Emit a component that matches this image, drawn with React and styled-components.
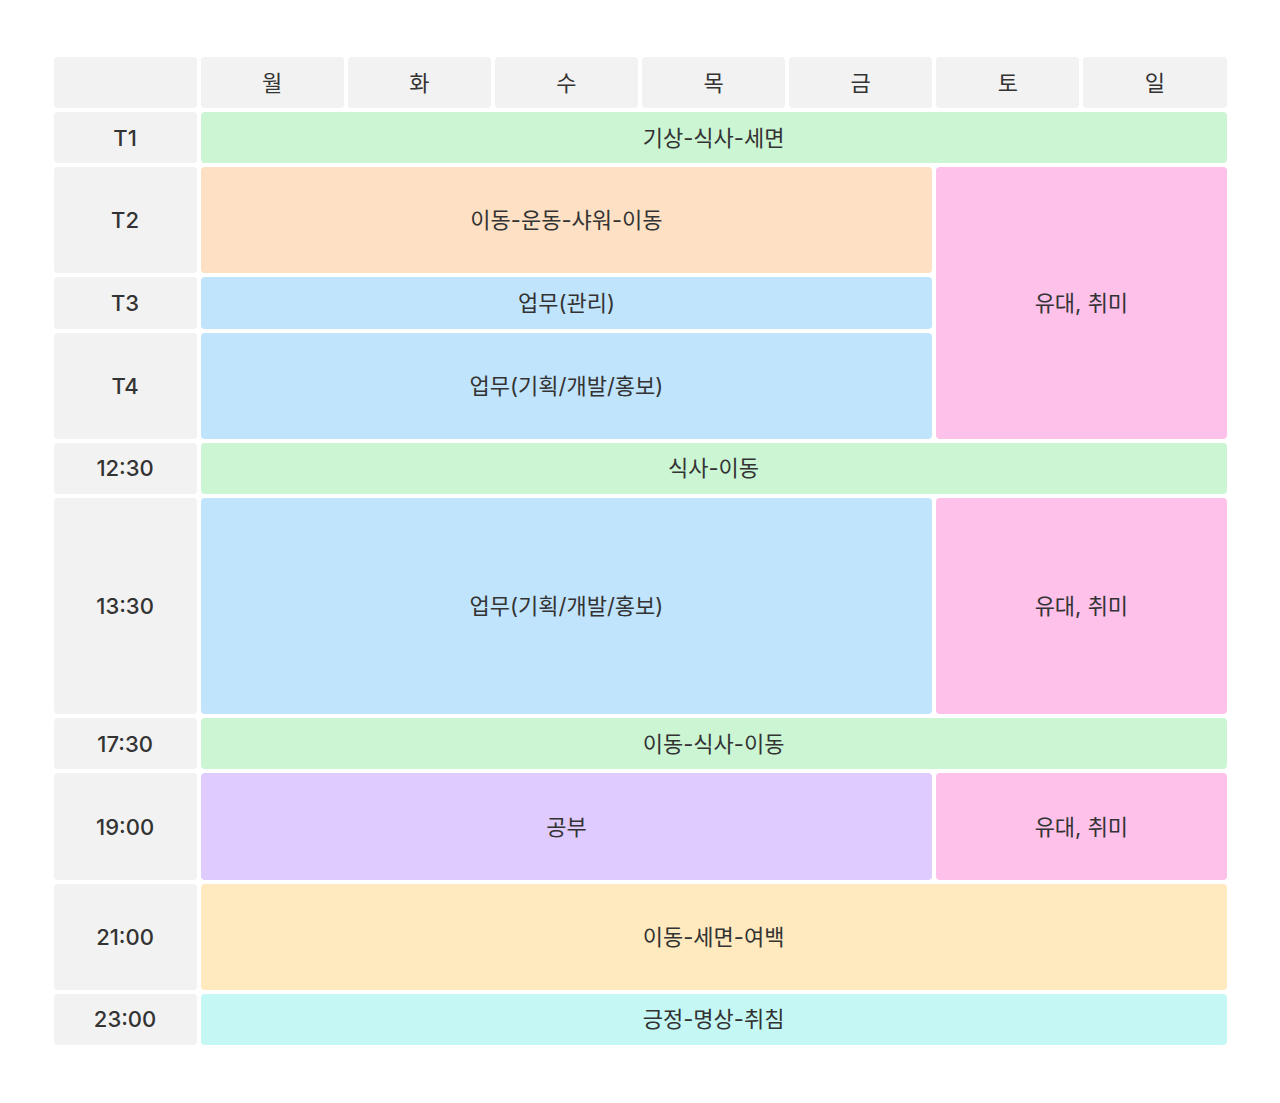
import React from 'react'
import styled, { createGlobalStyle } from 'styled-components'

const GlobalStyle = createGlobalStyle`
  html, body {
    margin: 0;
    padding: 0;
    background: #ffffff;
  }
  body {
    font-family: Inter, "Noto Sans CJK KR", sans-serif;
    color: #333333;
  }
`

const Page = styled.div`
  display: flex;
  justify-content: center;
  padding-top: 57px;
`

const Table = styled.div`
  display: grid;
  width: 1173px;
  height: 988px;
  grid-template-columns: repeat(8, 1fr);
  grid-template-rows: repeat(18, 1fr);
  gap: 4px;
`

const Cell = styled.div`
  display: flex;
  align-items: center;
  justify-content: center;
  border-radius: 4px;
  font-size: 22px;
  line-height: 1;
  color: #333333;
  background: ${p => p.$bg || '#f2f2f2'};
  grid-column: ${p => p.$col} / span ${p => p.$span || 1};
  grid-row: ${p => p.$row} / span ${p => p.$rows || 1};
`

const DayCell = styled(Cell)`
  font-weight: 400;
`

const TimeCell = styled(Cell)`
  grid-column: 1;
  font-weight: 500;
`

const colors = {
  green: '#ccf5d3',
  orange: '#fee0c4',
  blue: '#c1e4fd',
  pink: '#fdc1ea',
  purple: '#dfcbfe',
  yellow: '#feeabe',
  cyan: '#c5f8f4',
}

const days = ['월', '화', '수', '목', '금', '토', '일']

const times = [
  { label: 'T1', row: 2, rows: 1 },
  { label: 'T2', row: 3, rows: 2 },
  { label: 'T3', row: 5, rows: 1 },
  { label: 'T4', row: 6, rows: 2 },
  { label: '12:30', row: 8, rows: 1 },
  { label: '13:30', row: 9, rows: 4 },
  { label: '17:30', row: 13, rows: 1 },
  { label: '19:00', row: 14, rows: 2 },
  { label: '21:00', row: 16, rows: 2 },
  { label: '23:00', row: 18, rows: 1 },
]

const blocks = [
  { text: '기상-식사-세면', col: 2, span: 7, row: 2, rows: 1, color: 'green' },
  { text: '이동-운동-샤워-이동', col: 2, span: 5, row: 3, rows: 2, color: 'orange' },
  { text: '유대, 취미', col: 7, span: 2, row: 3, rows: 5, color: 'pink' },
  { text: '업무(관리)', col: 2, span: 5, row: 5, rows: 1, color: 'blue' },
  { text: '업무(기획/개발/홍보)', col: 2, span: 5, row: 6, rows: 2, color: 'blue' },
  { text: '식사-이동', col: 2, span: 7, row: 8, rows: 1, color: 'green' },
  { text: '업무(기획/개발/홍보)', col: 2, span: 5, row: 9, rows: 4, color: 'blue' },
  { text: '유대, 취미', col: 7, span: 2, row: 9, rows: 4, color: 'pink' },
  { text: '이동-식사-이동', col: 2, span: 7, row: 13, rows: 1, color: 'green' },
  { text: '공부', col: 2, span: 5, row: 14, rows: 2, color: 'purple' },
  { text: '유대, 취미', col: 7, span: 2, row: 14, rows: 2, color: 'pink' },
  { text: '이동-세면-여백', col: 2, span: 7, row: 16, rows: 2, color: 'yellow' },
  { text: '긍정-명상-취침', col: 2, span: 7, row: 18, rows: 1, color: 'cyan' },
]

export default function App() {
  return (
    <Page>
      <GlobalStyle />
      <Table>
        <Cell $col={1} $row={1} />
        {days.map((d, i) => (
          <DayCell key={d} $col={i + 2} $row={1}>{d}</DayCell>
        ))}
        {times.map(t => (
          <TimeCell key={t.label} $col={1} $row={t.row} $rows={t.rows}>{t.label}</TimeCell>
        ))}
        {blocks.map((b, i) => (
          <Cell
            key={i}
            $col={b.col}
            $span={b.span}
            $row={b.row}
            $rows={b.rows}
            $bg={colors[b.color]}
          >
            {b.text}
          </Cell>
        ))}
      </Table>
    </Page>
  )
}
